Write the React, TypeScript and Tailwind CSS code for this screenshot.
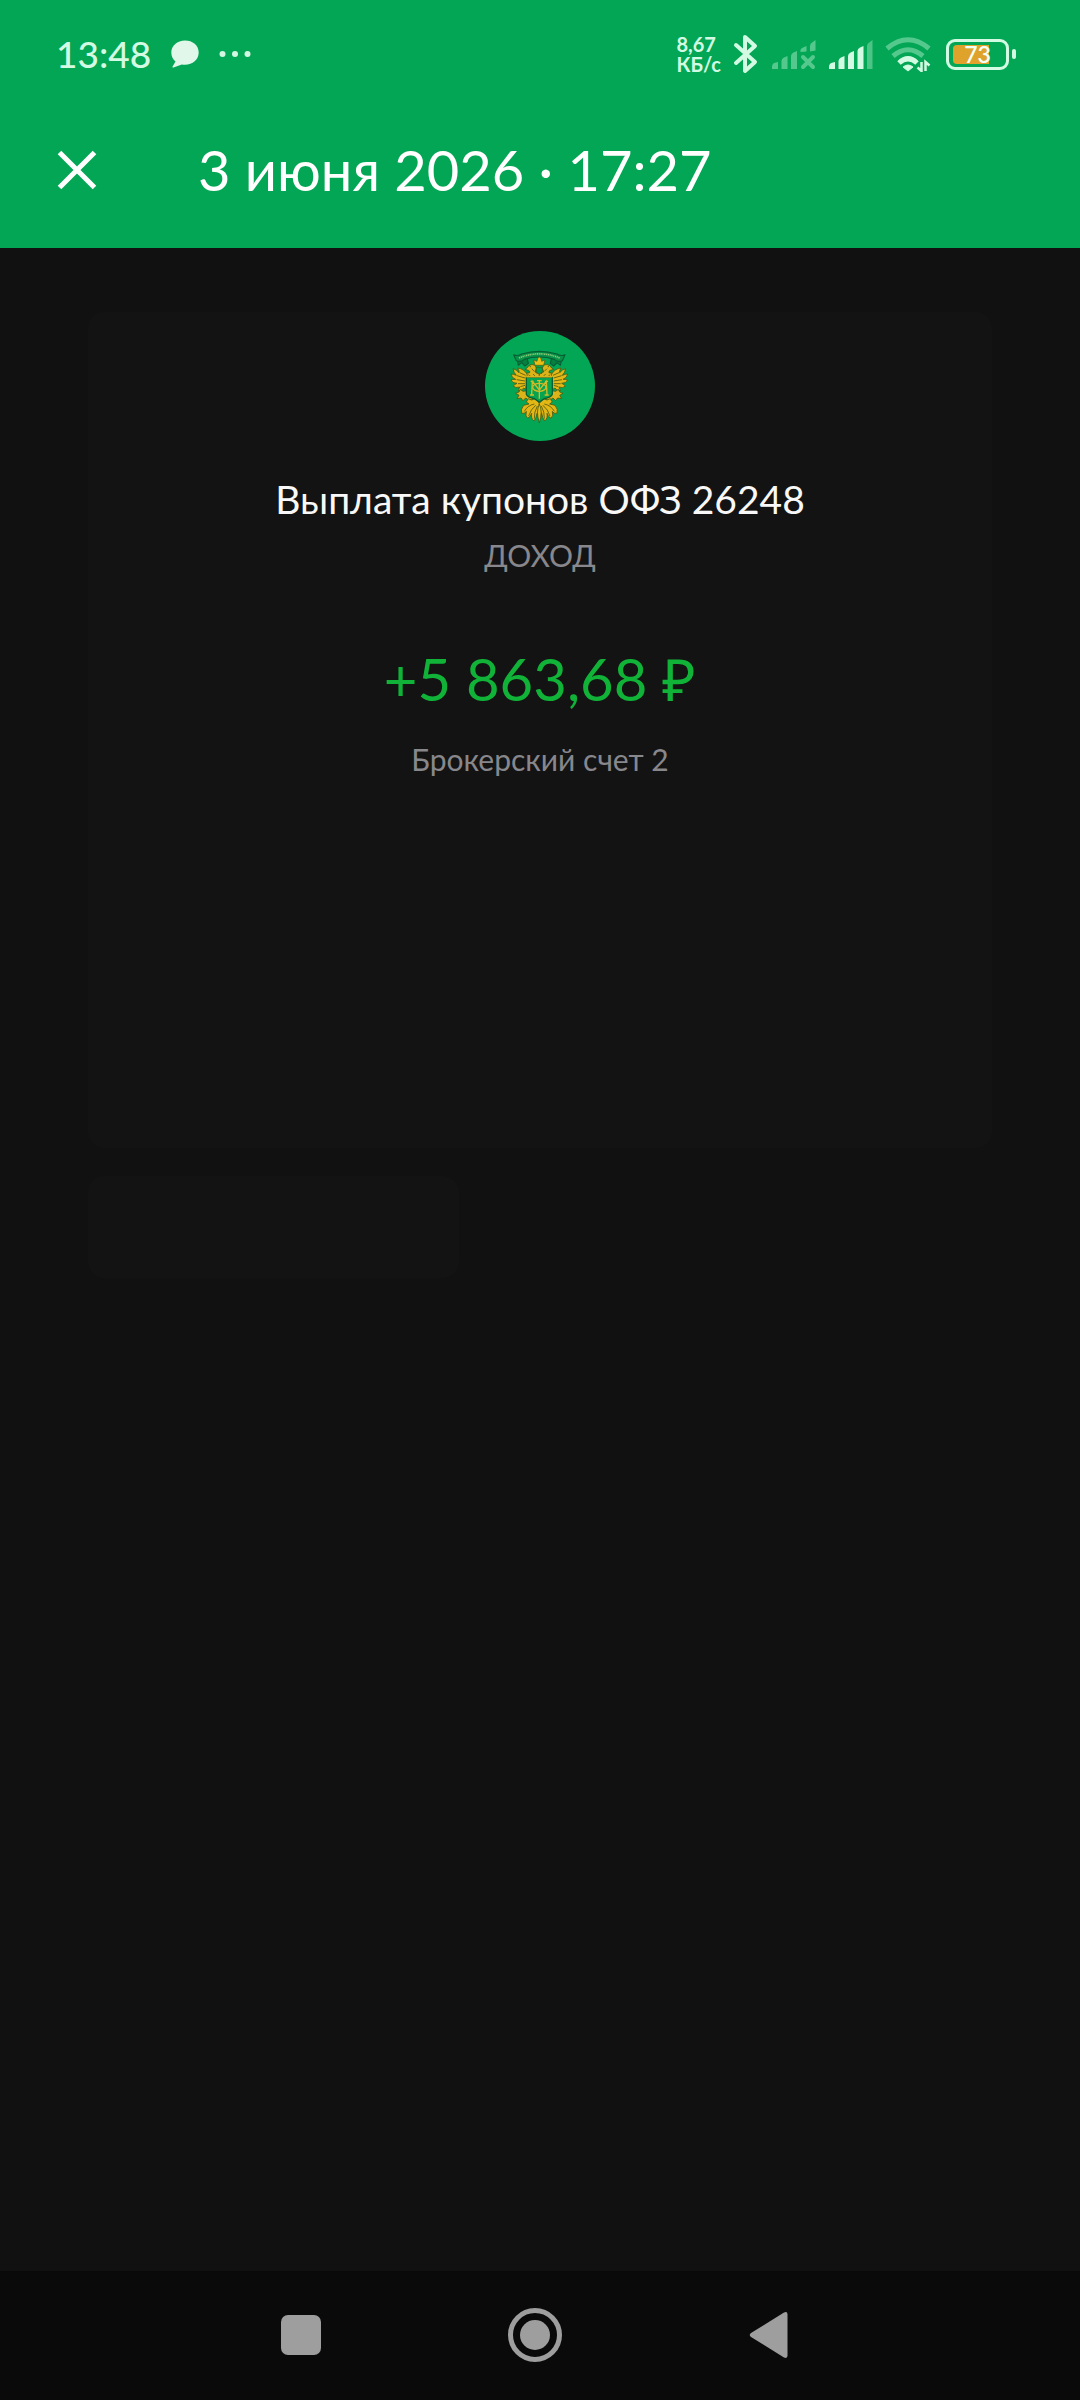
import type { ReactNode } from 'react'

function ChatIcon() {
  return (
    <svg width="28" height="28" viewBox="0 0 28 28" fill="#e0f7ea" aria-hidden="true">
      <path d="M14 0.5C6.3 0.5 0.3 5.6 0.3 12.4c0 4 1.700 7 4.200 9L1.600 26.400c-.5.9 0 1.300.9 1.100l8.300-3.100c1 .2 2.100.3 3.200.3 7.700 0 13.700-5.300 13.700-12.300S21.700.5 14 .5Z" />
    </svg>
  )
}

function DotsIcon() {
  return (
    <svg width="32" height="8" viewBox="0 0 32 8" fill="#d3f7e2" aria-hidden="true">
      <circle cx="3.500" cy="4" r="3" />
      <circle cx="16" cy="4" r="3" />
      <circle cx="28.500" cy="4" r="3" />
    </svg>
  )
}

function BluetoothIcon() {
  return (
    <svg width="26" height="40" viewBox="0 0 26 40" fill="none" stroke="#d3fbe3" strokeWidth="4" strokeLinecap="round" strokeLinejoin="round" aria-hidden="true">
      <path d="M3 11 22 28 12 37V3L22 12 3 29" />
    </svg>
  )
}

const BARS = [
  'M1 30V28Q1 24.500 4 23.800L7 23V30Z',
  'M10.500 30V22Q10.500 19.500 13 18.500L16.500 17V30Z',
  'M20 30V17Q20 14.500 22.500 13.500L26 12V30Z',
  'M29.500 30V12Q29.500 9.500 32 8.500L35.500 7V30Z',
  'M39 30V7Q39 4.500 41.500 3.200L44.500 1V30Z',
]

function SignalIcon() {
  return (
    <svg width="45" height="31" viewBox="0 0 45 31" fill="#d3fbe3" aria-hidden="true">
      {BARS.map((d, i) => <path key={d} d={d} opacity={i === 4 ? 0.35 : 1} />)}
    </svg>
  )
}

function NoSignalIcon() {
  return (
    <svg width="45" height="31" viewBox="0 0 45 31" fill="#55c98d" aria-hidden="true">
      {BARS.slice(0, 3).map(d => <path key={d} d={d} />)}
      <path d="M29.500 13V11Q29.500 9.500 32 8.500L35.500 7V12.500Z" />
      <path d="M39 12.500V7Q39 4.500 41.500 3.200L44.500 1V11.500Z" />
      <path d="M32 18 42 28M42 18 32 28" stroke="#55c98d" strokeWidth="4" strokeLinecap="round" />
    </svg>
  )
}

function WifiIcon() {
  return (
    <svg width="46" height="35" viewBox="0 0 46 35" fill="none" strokeWidth="5" aria-hidden="true">
      <path d="M2 11.500Q23-6 44 11.500" stroke="#55c98d" />
      <path d="M8 19Q23 6.500 38 19" stroke="#55c98d" />
      <path d="M14 26Q23 17.500 32 26" stroke="#d3fbe3" />
      <path d="M18 30Q23 26 28 30L23 34Z" fill="#d3fbe3" stroke="#d3fbe3" strokeWidth="1" />
      <path d="M36.500 25V34L32.500 30.500M40.500 34V25L44.500 28.500" stroke="#d3fbe3" strokeWidth="2.500" />
    </svg>
  )
}

function Battery({ level }: { level: number }) {
  return (
    <div className="ml-[3px] flex items-center gap-[3px]">
      <div className="relative flex h-[31px] w-[63px] items-center justify-center rounded-[9px] border-[3px] border-[#d3fbe3]">
        <div className="absolute inset-y-[3px] left-1 w-9 rounded-l-sm bg-[#dfa32c]" />
        <span className="relative text-[23px] leading-6 font-semibold text-[#f2fff6]">{level}</span>
      </div>
      <div className="h-[10px] w-1 rounded-full bg-[#d3fbe3]" />
    </div>
  )
}

// One side of the eagle, mirrored for the other
function EagleHalf() {
  return (
    <g stroke="#4d5a12" strokeWidth="2.500" strokeLinejoin="round">
      <path d="M103 82 90 78 94 66Q90 54 78 56Q70 58 66 66L60 70 70 73Q76 75 74 80L54 84 60 96 103 96Z" fill="#dcb41a" />
      <path d="M66 84Q56 68 38 66Q44 76 42 80Q34 70 24 68Q26 80 34 88Q24 84 18 84Q20 96 32 100Q22 100 18 102Q22 112 36 112Q28 116 25 120Q32 128 44 123L40 134Q52 134 56 126L62 130 68 98Z" fill="#e3b715" />
      <path d="M62 88 44 80M60 96 36 89M60 105 35 101M60 113 39 113M60 118 46 122" fill="none" />
      <path d="M68 134 54 136 46 130 42 138 32 142 42 148 36 158 48 156 54 164 62 156 74 164 86 158 74 150Z" fill="#dcb41a" />
      <path d="M103 172 90 158 80 162 70 158 64 168 72 174 56 178Q46 190 50 202Q60 204 64 196Q60 210 68 217Q77 212 80 202Q77 217 87 225Q94 216 96 202L103 192Z" fill="#e3b715" />
      <path d="M88 174Q68 178 58 196M92 178Q77 190 71 210M97 180Q87 198 88 218" fill="none" />
      <path d="M74 62h4M80 68l8 8M70 86l8 6M84 84l6 6M98 72l-2 12" fill="none" />
    </g>
  )
}

function MinistryEmblem() {
  return (
    <svg width="70" height="80" viewBox="0 0 210 240" role="img" aria-label="Минфин">
      <g fill="#07803f" stroke="#075f35" strokeWidth="3.500" strokeLinejoin="round">
        <path d="M34 30 40 58 50 50 60 60 70 52 66 36ZM172 30 166 58 156 50 146 60 136 52 140 36Z" />
        <path d="M26 26Q38 32 50 24Q103 8 156 24Q168 32 180 26L172 44Q158 50 148 40Q103 26 58 40Q48 50 34 44Z" fill="#079247" />
      </g>
      <path d="M42 36Q103 11 164 36" fill="none" stroke="#8fc777" strokeWidth="5" strokeDasharray="4 2 3 2" />
      <EagleHalf />
      <g transform="translate(206 0) scale(-1 1)"><EagleHalf /></g>
      <path d="M90 58 86 42 96 46 98 37 103 33 108 37 110 46 120 42 116 58Z" fill="#e9bd14" stroke="#4d5a12" strokeWidth="2" />
      <path d="M94 64H112V76Q110 82 103 85Q96 82 94 76Z" fill="#07a44f" stroke="#4d5a12" strokeWidth="2" />
      <path d="M64 94H142V145Q138 155 118 158L103 168 88 158Q68 155 64 145Z" fill="#07a44f" stroke="#075f35" strokeWidth="4" />
      <path d="M64 92H142" stroke="#dcb41a" strokeWidth="5" />
      <g fill="none" stroke="#d1bb2a" strokeWidth="4">
        <path d="M80 146 82 106 103 132 124 106 126 146M75 147H87M119 147H131M77 106H86M120 106H129" />
        <path d="M103 104V158M96 104H110" />
        <ellipse cx="103" cy="124" rx="20" ry="12" />
      </g>
      <path d="M103 174Q92 196 103 231Q114 196 103 174Z" fill="#e9bd14" stroke="#4d5a12" strokeWidth="2.500" />
    </svg>
  )
}

function StatusBar() {
  return (
    <div className="flex h-24 items-center justify-between pt-3 pr-16 pl-14">
      <div className="flex items-center gap-5">
        <span className="text-[37px] leading-10 font-medium text-[#d3fbe3]">13:48</span>
        <ChatIcon />
        <DotsIcon />
      </div>
      <div className="flex items-center gap-3">
        <div className="text-[20px] leading-5 font-bold text-[#d3fbe3]">
          <div>8,67</div>
          <div>КБ/с</div>
        </div>
        <BluetoothIcon />
        <NoSignalIcon />
        <SignalIcon />
        <WifiIcon />
        <Battery level={73} />
      </div>
    </div>
  )
}

function NavButton({ label, children }: { label: string; children: ReactNode }) {
  return (
    <button type="button" aria-label={label} className="flex size-14 items-center justify-center">
      <svg width="56" height="56" viewBox="0 0 56 56" fill="#9e9e9e">{children}</svg>
    </button>
  )
}

export default function App() {
  return (
    <div className="flex min-h-screen flex-col bg-[#111111] font-[Lato,sans-serif]">
      <header className="bg-[#03a654]">
        <StatusBar />
        <div className="flex h-[152px] items-center gap-[97px] pb-1 pl-[53px]">
          <button type="button" aria-label="Закрыть" className="flex size-12 items-center justify-center">
            <svg width="48" height="48" viewBox="0 0 48 48" fill="none" stroke="#fff" strokeWidth="5">
              <path d="M6.500 6.500 41.500 41.500M41.500 6.500 6.500 41.500" />
            </svg>
          </button>
          <h1 className="text-[56px] leading-16 text-white">3 июня 2026 · 17:27</h1>
        </div>
      </header>

      <main className="flex-1 px-[88px] pt-16">
        <section className="flex min-h-[836px] flex-col items-center rounded-2xl bg-[#131313] pt-[19px]">
          <div className="flex size-[110px] items-center justify-center rounded-full bg-[#03a654]">
            <MinistryEmblem />
          </div>
          <h2 className="mt-[30px] text-[39px] leading-14 text-[#f8f8f8]">Выплата купонов ОФЗ 26248</h2>
          <p className="mt-1 text-[30px] leading-12 text-[#87878c]">ДОХОД</p>
          <p className="mt-[68px] text-[58px] leading-16 text-[#10b338]">+5 863,68 ₽</p>
          <p className="mt-6 text-[30px] leading-12 text-[#87878c]">Брокерский счет 2</p>
        </section>
        <div className="mt-7 h-[102px] w-[41%] rounded-2xl bg-[#131313]" />
      </main>

      <nav className="flex h-[129px] items-center justify-center gap-[178px] bg-[#0a0a0a] pr-[10px] pb-[2px]">
        <NavButton label="Недавние">
          <rect x="8" y="8" width="40" height="40" rx="7" />
        </NavButton>
        <NavButton label="Домой">
          <circle cx="28" cy="28" r="24.500" fill="none" stroke="#9e9e9e" strokeWidth="5" />
          <circle cx="28" cy="28" r="15" />
        </NavButton>
        <NavButton label="Назад">
          <path d="M10 26 43 5.500Q46.500 4 46.500 7.500V48.500Q46.500 52 43 50.500L10 30Q7.500 28 10 26Z" />
        </NavButton>
      </nav>
    </div>
  )
}
